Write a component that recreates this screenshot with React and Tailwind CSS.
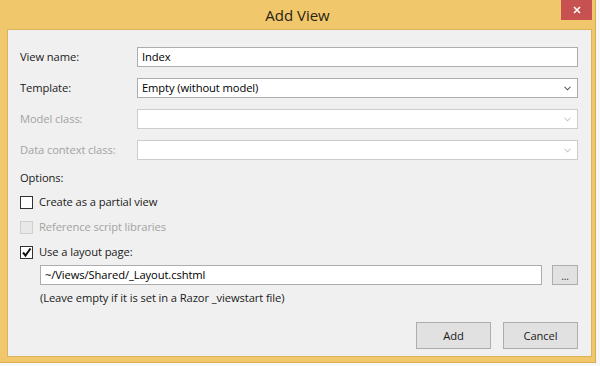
import React from 'react';

const font = { fontFamily: '"Open Sans", "Noto Sans", sans-serif' };

const Chevron = ({ disabled }) => (
  <svg viewBox="0 0 8 5" className="h-[5px] w-[7px]" fill="none" stroke={disabled ? '#c4c4c4' : '#4a4a4a'} strokeWidth="1.2">
    <path d="M0.5 0.5 L4 4 L7.5 0.5" />
  </svg>
);

const Field = ({ label, value, select, disabled }) => (
  <div className="flex h-[20px] items-center">
    <span className={`w-[129px] shrink-0 pl-[12px] ${disabled ? 'text-[#a3a3a3]' : 'text-[#1b1b1b]'}`}>{label}</span>
    <div
      className={`flex h-[20px] flex-1 items-center justify-between border bg-white pl-[4px] pr-[6px] ${
        disabled ? 'border-[#cccccc]' : 'border-[#adadad]'
      }`}
    >
      <span className="text-black">{value}</span>
      {select ? <Chevron disabled={disabled} /> : null}
    </div>
  </div>
);

const Check = ({ label, checked, disabled }) => (
  <div className="flex h-[16px] items-center pl-[12px]">
    <span
      className={`flex h-[13px] w-[13px] items-center justify-center border ${
        disabled ? 'border-[#cfcfcf] bg-[#e8e8e8]' : 'border-[#333333] bg-white'
      }`}
    >
      {checked ? (
        <svg viewBox="0 0 11 11" className="h-[11px] w-[11px]" fill="none" stroke="#111" strokeWidth="2">
          <path d="M2 5.5 L4.5 8.5 L9.5 1.5" />
        </svg>
      ) : null}
    </span>
    <span className={`ml-[6px] ${disabled ? 'text-[#a3a3a3]' : 'text-[#1b1b1b]'}`}>{label}</span>
  </div>
);

export default function App() {
  return (
    <div
      className="h-[366px] w-[600px] overflow-hidden bg-[#f7f7f7] text-[11.2px] leading-[16px] tracking-[-0.1px]"
      style={font}
    >
      <div className="h-[363px] w-[596px] border-r border-b border-[#d9ae4c] bg-[#f0c86b]">
        <div className="relative flex h-[29px] items-center justify-center">
          <span className="text-[15px] tracking-normal text-[#2b2212]">Add View</span>
          <div className="absolute left-[561px] top-0 flex h-[20px] w-[31px] items-center justify-center bg-[#c75050]">
            <svg viewBox="0 0 8 8" className="h-[8px] w-[8px]" fill="none" stroke="#fff" strokeWidth="1.6">
              <path d="M1 1 L7 7 M7 1 L1 7" />
            </svg>
          </div>
        </div>
        <div className="ml-[7px] h-[328px] w-[585px] border border-[#dbb35c] bg-[#f0f0f0] pr-[13px]">
          <div className="mt-[17px] flex flex-col gap-[11px]">
            <Field label="View name:" value="Index" />
            <Field label="Template:" value="Empty (without model)" select />
            <Field label="Model class:" select disabled />
            <Field label="Data context class:" select disabled />
          </div>
          <div className="mt-[10px] h-[16px] pl-[12px] text-[#1b1b1b]">Options:</div>
          <div className="mt-[8px] flex flex-col gap-[9px]">
            <Check label="Create as a partial view" />
            <Check label="Reference script libraries" disabled />
            <Check label="Use a layout page:" checked />
          </div>
          <div className="mt-[4px] flex h-[21px] items-center pl-[32px]">
            <div className="flex h-[20px] w-[502px] items-center border border-[#adadad] bg-white pl-[4px] text-black">
              ~/Views/Shared/_Layout.cshtml
            </div>
            <div className="ml-auto flex h-[20px] w-[26px] items-end justify-center border border-[#adadad] bg-[#e1e1e1] pb-[3px] text-[10px] leading-[10px] text-[#333]">
              ...
            </div>
          </div>
          <div className="mt-[5px] h-[16px] pl-[32px] text-[#1b1b1b]">
            (Leave empty if it is set in a Razor _viewstart file)
          </div>
          <div className="mt-[16px] flex justify-end gap-[12px]">
            <button type="button" className="h-[27px] w-[75px] border border-[#adadad] bg-[#e1e1e1] text-[#1b1b1b]">
              Add
            </button>
            <button type="button" className="h-[27px] w-[75px] border border-[#adadad] bg-[#e1e1e1] text-[#1b1b1b]">
              Cancel
            </button>
          </div>
        </div>
      </div>
    </div>
  );
}
